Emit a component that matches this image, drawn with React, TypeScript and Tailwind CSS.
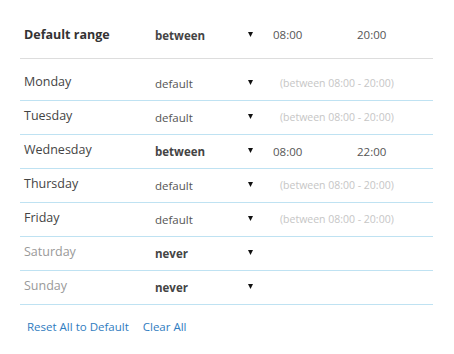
import React from "react";

type Row = {
  day: string;
  mode: "default" | "between" | "never";
  from?: string;
  to?: string;
};

const rows: Row[] = [
  { day: "Monday", mode: "default" },
  { day: "Tuesday", mode: "default" },
  { day: "Wednesday", mode: "between", from: "08:00", to: "22:00" },
  { day: "Thursday", mode: "default" },
  { day: "Friday", mode: "default" },
  { day: "Saturday", mode: "never" },
  { day: "Sunday", mode: "never" },
];

function Arrow() {
  return (
    <svg width="5" height="5" viewBox="0 0 5 5" className="block mb-[2px]">
      <polygon points="0,0 5,0 2.5,5" fill="#111" />
    </svg>
  );
}

export default function App() {
  return (
    <div
      className="w-[454px] h-[354px] bg-white text-[#444]"
      style={{ fontFamily: '"Open Sans", "Noto Sans", sans-serif' }}
    >
      <div className="pl-[20px] pt-[12px] w-[433px]">
        <div className="grid grid-cols-[135px_93px_25px_84px_1fr] items-center h-[47px] border-b border-[#dddddd]">
          <div className="pl-[4px] text-[12.5px] font-bold text-[#333]">Default range</div>
          <div className="text-[11.5px] font-bold text-[#444] pt-[2px]">between</div>
          <div className="flex items-center"><Arrow /></div>
          <div className="text-[11.5px] text-[#555]">08:00</div>
          <div className="text-[11.5px] text-[#555]">20:00</div>
        </div>
        <div className="mt-[8px]">
          {rows.map((r) => {
            const muted = r.mode === "never";
            return (
              <div
                key={r.day}
                className="grid grid-cols-[135px_93px_25px_84px_1fr] items-center h-[34px] border-b border-[#bfe2f2]"
              >
                <div
                  className={`pl-[4px] text-[12.5px] pb-[2px] ${muted ? "text-[#999]" : "text-[#444]"}`}
                >
                  {r.day}
                </div>
                <div
                  className={`text-[11.5px] ${r.mode === "default" ? "text-[#555]" : "font-bold text-[#444]"}`}
                >
                  {r.mode}
                </div>
                <div className="flex items-center"><Arrow /></div>
                {r.mode === "between" ? (
                  <>
                    <div className="text-[11.5px] text-[#555]">{r.from}</div>
                    <div className="text-[11.5px] text-[#555]">{r.to}</div>
                  </>
                ) : r.mode === "default" ? (
                  <div className="col-span-2 pl-[7px] text-[10.5px] text-[#c6c6c6]">
                    (between 08:00 - 20:00)
                  </div>
                ) : (
                  <div className="col-span-2" />
                )}
              </div>
            );
          })}
        </div>
        <div className="flex gap-[14px] pl-[7px] mt-[13px] text-[11.5px] text-[#2f7cc0]">
          <span>Reset All to Default</span>
          <span>Clear All</span>
        </div>
      </div>
    </div>
  );
}
